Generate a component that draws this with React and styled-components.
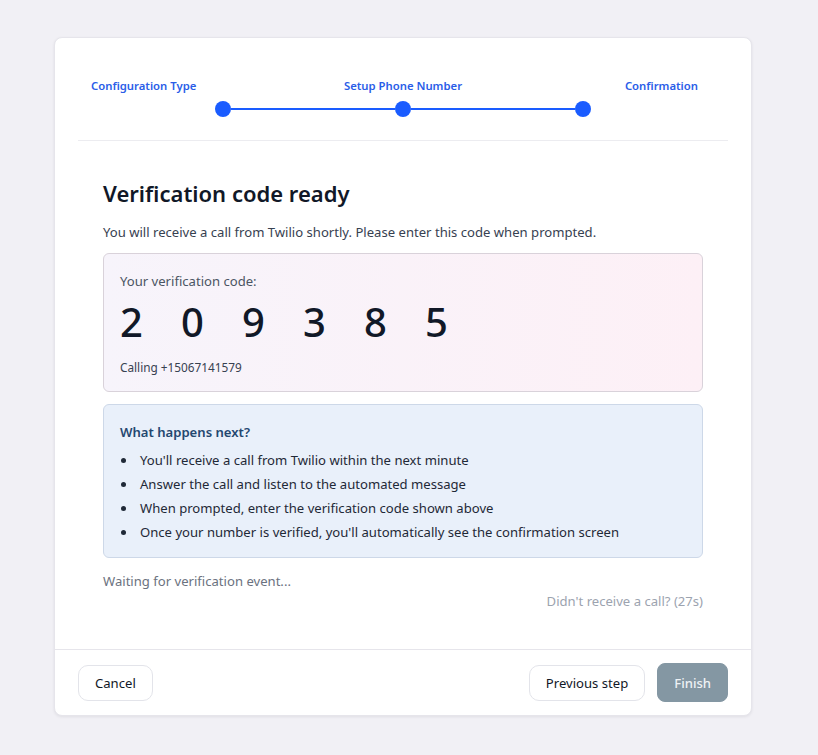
import React from 'react';
import styled, { createGlobalStyle } from 'styled-components';

const GlobalStyle = createGlobalStyle`
  html, body {
    margin: 0;
    padding: 0;
    background: #f1f0f5;
    font-family: "Noto Sans", "Open Sans", sans-serif;
    color: #1f2937;
  }
  * { box-sizing: border-box; }
`;

const Page = styled.div`
  min-height: 755px;
  padding: 37px 0 0 54px;
`;

const Card = styled.div`
  width: 698px;
  height: 679px;
  background: #fff;
  border: 1px solid #e6e5eb;
  border-radius: 8px;
  box-shadow: 0 1px 3px rgba(20, 20, 40, 0.08);
  display: flex;
  flex-direction: column;
`;

const Header = styled.div`
  margin: 0 23px;
  padding-top: 39px;
  padding-bottom: 23px;
  border-bottom: 1px solid #ececf0;
`;

const Labels = styled.div`
  display: grid;
  grid-template-columns: 1fr auto 1fr;
  align-items: center;
`;

const StepLabel = styled.div`
  font-size: 11.3px;
  font-weight: 600;
  color: #2a5de8;
  line-height: 18px;
  justify-self: ${p => p.$align};
  margin: ${p => p.$margin || '0'};
`;

const Track = styled.div`
  display: flex;
  align-items: center;
  justify-content: center;
  margin-top: 6px;
`;

const Dot = styled.span`
  width: 16px;
  height: 16px;
  border-radius: 50%;
  background: #1a5cff;
`;

const Line = styled.span`
  width: 164px;
  height: 2px;
  background: #1a5cff;
`;

const Body = styled.div`
  flex: 1;
  padding: 36px 48px 0;
`;

const Title = styled.h2`
  margin: 0;
  font-size: 22px;
  font-weight: 600;
  color: #111827;
  line-height: 32px;
`;

const Lead = styled.p`
  margin: 13px 0 11px;
  font-size: 13.1px;
  line-height: 20px;
  color: #374151;
`;

const CodeBox = styled.div`
  border: 1px solid #d9d2da;
  border-radius: 6px;
  background: linear-gradient(90deg, #f7f4fb 0%, #fdf0f6 100%);
  padding: 17px 16px 15px;
`;

const CodeLabel = styled.div`
  font-size: 13.1px;
  line-height: 20px;
  color: #4b5563;
`;

const Digits = styled.div`
  display: flex;
  margin-top: 5px;
  height: 52px;
  align-items: center;
`;

const Digit = styled.span`
  width: 61px;
  font-size: 40px;
  font-weight: 500;
  color: #111827;
  line-height: 52px;
`;

const Calling = styled.div`
  margin-top: 10px;
  font-size: 11.8px;
  line-height: 18px;
  color: #374151;
`;

const InfoBox = styled.div`
  margin-top: 12px;
  border: 1px solid #cdd8e8;
  border-radius: 6px;
  background: #e9f0fa;
  padding: 17px 16px 13px;
`;

const InfoTitle = styled.div`
  font-size: 13.1px;
  font-weight: 600;
  color: #24476f;
  line-height: 20px;
`;

const List = styled.ul`
  margin: 6px 0 0;
  padding-left: 1px;
  list-style: none;
`;

const Item = styled.li`
  font-size: 13.1px;
  line-height: 24px;
  color: #1f2937;

  &::before {
    content: '';
    display: inline-block;
    width: 5px;
    height: 5px;
    border-radius: 50%;
    background: #1f2937;
    margin-right: 14px;
    vertical-align: 2px;
  }
`;

const Waiting = styled.div`
  margin-top: 13px;
  font-size: 13.1px;
  line-height: 20px;
  color: #6b7280;
`;

const Resend = styled.div`
  text-align: right;
  font-size: 13.1px;
  line-height: 20px;
  color: #9ca3af;
`;

const Footer = styled.div`
  border-top: 1px solid #e6e5eb;
  padding: 13px 23px 13px;
  display: flex;
  align-items: center;
  gap: 12px;
`;

const Spacer = styled.div`
  flex: 1;
`;

const Button = styled.button`
  font-family: inherit;
  font-size: 13.1px;
  height: ${p => (p.$primary ? '39px' : '36px')};
  padding: 0 16px;
  border-radius: ${p => (p.$primary ? '8px' : '10px')};
  border: 1px solid ${p => (p.$primary ? '#8497a3' : '#e3e4ea')};
  background: ${p => (p.$primary ? '#8497a3' : '#fff')};
  color: ${p => (p.$primary ? '#eef2f5' : '#111827')};
  font-weight: ${p => (p.$primary ? 500 : 400)};
  cursor: pointer;
`;

const steps = [
  "You'll receive a call from Twilio within the next minute",
  'Answer the call and listen to the automated message',
  'When prompted, enter the verification code shown above',
  "Once your number is verified, you'll automatically see the confirmation screen",
];

export default function App() {
  const code = '209385';
  return (
    <>
      <GlobalStyle />
      <Page>
        <Card>
          <Header>
            <Labels>
              <StepLabel $align="start" $margin="0 0 0 13px">Configuration Type</StepLabel>
              <StepLabel $align="center">Setup Phone Number</StepLabel>
              <StepLabel $align="end" $margin="0 30px 0 0">Confirmation</StepLabel>
            </Labels>
            <Track>
              <Dot />
              <Line />
              <Dot />
              <Line />
              <Dot />
            </Track>
          </Header>
          <Body>
            <Title>Verification code ready</Title>
            <Lead>You will receive a call from Twilio shortly. Please enter this code when prompted.</Lead>
            <CodeBox>
              <CodeLabel>Your verification code:</CodeLabel>
              <Digits>
                {code.split('').map((d, i) => (
                  <Digit key={i}>{d}</Digit>
                ))}
              </Digits>
              <Calling>Calling +15067141579</Calling>
            </CodeBox>
            <InfoBox>
              <InfoTitle>What happens next?</InfoTitle>
              <List>
                {steps.map(s => (
                  <Item key={s}>{s}</Item>
                ))}
              </List>
            </InfoBox>
            <Waiting>Waiting for verification event...</Waiting>
            <Resend>Didn't receive a call? (27s)</Resend>
          </Body>
          <Footer>
            <Button>Cancel</Button>
            <Spacer />
            <Button>Previous step</Button>
            <Button $primary>Finish</Button>
          </Footer>
        </Card>
      </Page>
    </>
  );
}
